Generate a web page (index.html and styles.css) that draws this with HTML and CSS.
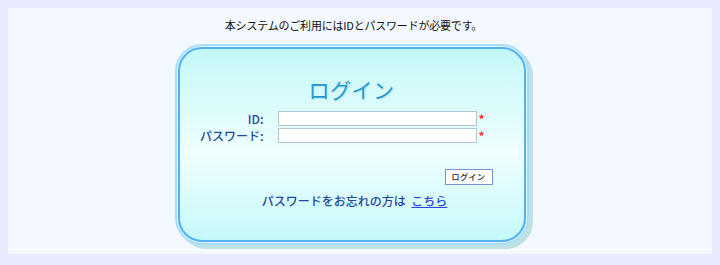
FILE: index.html
```html
<!DOCTYPE html>
<html lang="ja">
<head>
    <meta charset="UTF-8">
    <title>ログイン</title>
    <link rel="stylesheet" href="styles.css">
</head>
<body>
    <div class="panel">
        <p class="notice">本システムのご利用にはIDとパスワードが必要です。</p>

        <div class="login-card">
            <h1 class="login-title">ログイン</h1>

            <div class="login-form">
                <label for="user-id">ID:</label>
                <input id="user-id" type="text">
                <span class="required">*</span>

                <label for="user-pass">パスワード:</label>
                <input id="user-pass" type="password">
                <span class="required">*</span>
            </div>

            <div class="login-actions">
                <button class="login-btn">ログイン</button>
            </div>

            <p class="forgot">パスワードをお忘れの方は <a href="#">こちら</a></p>
        </div>
    </div>
</body>
</html>
```

FILE: styles.css
```css
body {
    margin: 0; padding: 8px 8px 0;
    background: #e8eaff;
    font-family: "Noto Sans CJK JP", "Liberation Sans", sans-serif;
}
.panel {
    background: #f4f8ff; height: 246px;
    padding-right: 17px; box-sizing: border-box;
    display: flex; flex-direction: column; align-items: center;
}
.notice {
    margin: 9px 0 0 4px; font-size: 11px; line-height: 16px; color: #111;
    letter-spacing: -0.2px;
}
.login-card {
    margin-top: 14px; width: 348px; height: 195px; box-sizing: border-box;
    border: 2px solid #55b2f2; border-radius: 24px;
    background: linear-gradient(#c4f8f8 0%, #f0fefe 55%, #c4f9fa 100%);
    box-shadow: 0 0 0 1px #e2f6ff, 0 0 0 3px #a6dfff, 4px 4px 0 3px #bfe1e3;
}
.login-title {
    margin: 27px 0 0; text-align: center;
    font-size: 21px; line-height: 26px; font-weight: normal;
    color: #1f98cf; letter-spacing: 0.5px;
    text-shadow: 1px 1px 1px rgba(0,120,160,0.15);
}
.login-form {
    margin-top: 9px;
    display: grid; grid-template-columns: 84px 199px auto;
    row-gap: 2px; align-items: center;
}
.login-form label {
    text-align: right; font-size: 12px; line-height: 15px; font-weight: 500;
    color: #22479a;
}
.login-form input {
    margin-left: 14px; width: 199px; height: 15px; box-sizing: border-box;
    border: 1px solid #b2c6da; background: #fff; padding: 0;
}
.required {
    margin-left: 16px; color: #ff3030; font-size: 12px; line-height: 10px; font-weight: bold;
}
.login-actions {
    margin-top: 26px; display: flex; justify-content: flex-end; padding-right: 31px;
}
.login-btn {
    width: 48px; height: 16px; padding: 0;
    background: #fff; border: 1px solid #7d8fd6;
    font-family: inherit; font-size: 8px; line-height: 14px; color: #222; font-weight: 500;
    letter-spacing: 0.5px;
}
.forgot {
    margin: 8px 0 0; text-align: center; padding-left: 6px;
    font-size: 12px; line-height: 16px; color: #22479a; font-weight: 500;
}
.forgot a { color: #2a44dd; margin-left: 3px; }
```
